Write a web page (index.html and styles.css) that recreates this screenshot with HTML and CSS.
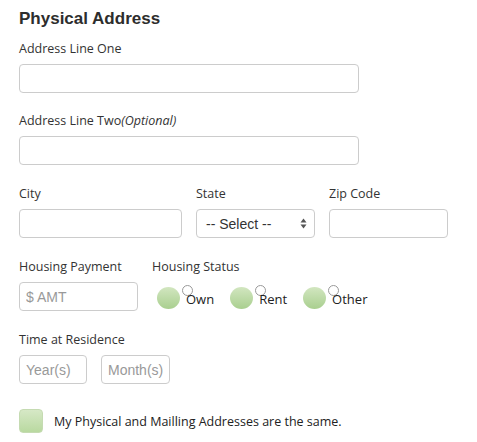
FILE: index.html
```html
<!DOCTYPE html>
<html>
<head>
<meta charset="utf-8">
<link rel="stylesheet" href="styles.css">
</head>
<body>
<form class="form">
  <h2 class="title">Physical Address</h2>

  <div class="field first">
    <label class="label">Address Line One</label>
    <input class="input w-full" type="text">
  </div>

  <div class="field">
    <label class="label">Address Line Two<em class="opt">(Optional)</em></label>
    <input class="input w-full" type="text">
  </div>

  <div class="row">
    <div class="field">
      <label class="label">City</label>
      <input class="input w-city" type="text">
    </div>
    <div class="field">
      <label class="label">State</label>
      <div class="select">
        <span>-- Select --</span>
        <svg class="arrows" width="7" height="11" viewBox="0 0 7 11"><path d="M3.5 0.5 L6.5 4.5 L0.5 4.5 Z M3.5 10.5 L6.5 6.5 L0.5 6.5 Z" fill="#555"/></svg>
      </div>
    </div>
    <div class="field">
      <label class="label">Zip Code</label>
      <input class="input w-zip" type="text">
    </div>
  </div>

  <div class="row">
    <div class="field">
      <label class="label">Housing Payment</label>
      <input class="input w-amt" type="text" placeholder="$ AMT">
    </div>
    <div class="field status">
      <label class="label">Housing Status</label>
      <div class="radios">
        <span class="radio"><span class="bubble"></span><span class="dot"></span><span class="rtext">Own</span></span>
        <span class="radio"><span class="bubble"></span><span class="dot"></span><span class="rtext">Rent</span></span>
        <span class="radio"><span class="bubble"></span><span class="dot"></span><span class="rtext">Other</span></span>
      </div>
    </div>
  </div>

  <div class="field">
    <label class="label">Time at Residence</label>
    <div class="pair">
      <input class="input w-year" type="text" placeholder="Year(s)">
      <input class="input w-month" type="text" placeholder="Month(s)">
    </div>
  </div>

  <div class="check">
    <span class="box"></span>
    <span class="ctext">My Physical and Mailling Addresses are the same.</span>
  </div>
</form>
</body>
</html>
```
FILE: styles.css
```css
html, body { margin: 0; padding: 0; background: #fff; }
body { font-family: "Open Sans", "Noto Sans", sans-serif; color: #333; }

.form {
  padding: 9px 19px 0 19px;
  display: flex;
  flex-direction: column;
}

.title {
  margin: 0 0 11px 0;
  font-family: "Liberation Sans", Arial, sans-serif;
  font-weight: bold;
  font-size: 17px;
  line-height: 20px;
  color: #2d2d2d;
}

.field {
  display: flex;
  flex-direction: column;
  margin-bottom: 20px;
}
.field.first { margin-bottom: 19px; }

.row .field { margin-bottom: 0; }
.row { display: flex; gap: 14px; margin-bottom: 20px; }

.label {
  font-size: 12.5px;
  line-height: 18px;
  margin-bottom: 6px;
  color: #333;
}
.opt { font-style: italic; color: #333; }

.input {
  box-sizing: border-box;
  height: 29px;
  margin: 0;
  border: 1px solid #ccc;
  border-radius: 4px;
  background: #fff;
  padding: 0 2px 0 6px;
  font-family: "Liberation Sans", Arial, sans-serif;
  font-size: 14px;
  color: #333;
  outline: none;
}
.input::placeholder { color: #999; }

.w-full { width: 340px; }
.w-city { width: 163px; }
.w-zip { width: 119px; }
.w-amt { width: 119px; }
.w-year { width: 68px; }
.w-month { width: 69px; }

.select {
  box-sizing: border-box;
  width: 119px;
  height: 29px;
  border: 1px solid #ccc;
  border-radius: 4px;
  display: flex;
  align-items: center;
  justify-content: space-between;
  padding: 0 7px 0 9px;
  font-family: "Liberation Sans", Arial, sans-serif;
  font-size: 14px;
  color: #333;
}

.radios {
  display: flex;
  align-items: center;
  height: 29px;
  padding-left: 5px;
  gap: 16px;
}
.radio {
  position: relative;
  display: flex;
  align-items: center;
  height: 29px;
}
.bubble {
  width: 23px;
  height: 22px;
  border-radius: 50%;
  background: linear-gradient(#d2e6c0, #a9cf8f);
  margin-top: 3px;
}
.dot {
  position: absolute;
  left: 25px;
  top: 3px;
  width: 9px;
  height: 9px;
  border-radius: 50%;
  border: 1px solid #999;
  background: #fff;
}
.rtext {
  position: relative;
  margin-left: 6px;
  margin-top: 5px;
  font-size: 13px;
  color: #222;
}

.pair { display: flex; gap: 14px; }

.check {
  display: flex;
  align-items: center;
  margin-top: 5px;
}
.box {
  width: 24px;
  height: 24px;
  box-sizing: border-box;
  border-radius: 4px;
  border: 1px solid #c5dbb2;
  background: linear-gradient(#d6e8c6, #b9d9a0);
}
.ctext {
  margin-left: 11px;
  font-size: 12.5px;
  color: #222;
}
```
